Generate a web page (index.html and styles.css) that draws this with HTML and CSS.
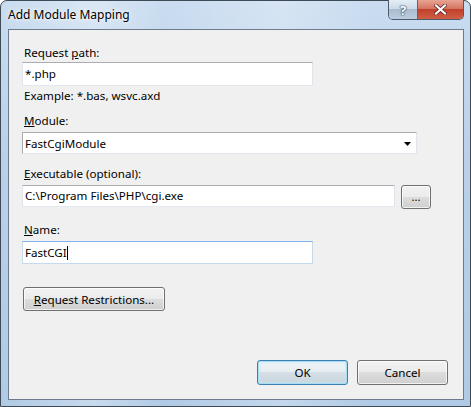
FILE: index.html
```html
<!DOCTYPE html>
<html>
<head>
<meta charset="utf-8">
<link rel="stylesheet" href="styles.css">
</head>
<body>
<div class="window">
  <div class="titlebar">
    <div class="title">Add Module Mapping</div>
    <div class="caption-buttons">
      <div class="cap-btn help">?</div>
      <div class="cap-btn close">
        <svg width="13" height="11" viewBox="0 0 13 11"><path d="M2 1.5 L11 9.5 M11 1.5 L2 9.5" stroke="#5a2020" stroke-width="3.6" stroke-linecap="square"/><path d="M2 1.5 L11 9.5 M11 1.5 L2 9.5" stroke="#ffffff" stroke-width="2.2" stroke-linecap="square"/></svg>
      </div>
    </div>
  </div>
  <div class="client">
    <div class="label l-first">Request <u>p</u>ath:</div>
    <div class="textbox tb-short tb-first">*.php</div>
    <div class="label l-example">Example: *.bas, wsvc.axd</div>
    <div class="label l-module"><u>M</u>odule:</div>
    <div class="combo">
      <span>FastCgiModule</span>
      <svg class="arrow" width="7" height="4" viewBox="0 0 7 4"><path d="M0 0 H7 L3.5 4 Z" fill="#000"/></svg>
    </div>
    <div class="label l-exec"><u>E</u>xecutable (optional):</div>
    <div class="exec-row">
      <div class="textbox tb-exec">C:\Program Files\PHP\cgi.exe</div>
      <div class="button browse">...</div>
    </div>
    <div class="label l-name"><u>N</u>ame:</div>
    <div class="textbox tb-short tb-name focused">FastCGI<span class="caret"></span></div>
    <div class="button restrict"><u>R</u>equest Restrictions...</div>
    <div class="footer">
      <div class="button ok default">OK</div>
      <div class="button cancel">Cancel</div>
    </div>
  </div>
</div>
</body>
</html>
```
FILE: styles.css
```css
* { box-sizing: border-box; }
html, body { margin: 0; padding: 0; }
body {
  width: 471px;
  height: 407px;
  font-family: "Noto Sans", "Open Sans", sans-serif;
  font-size: 11.6px;
  color: #000;
  background: #fff;
}
.window {
  width: 471px;
  height: 407px;
  display: flex;
  flex-direction: column;
  border: 1px solid #3f4a57;
  border-radius: 7px 7px 0 0;
  background:
    linear-gradient(to right, rgba(255,255,255,0) 0%, rgba(255,255,255,0.3) 20%, rgba(255,255,255,0) 35%, rgba(255,255,255,0.25) 60%, rgba(255,255,255,0) 80%),
    linear-gradient(to bottom, #c9dcf0 0%, #b9d0e8 40%, #b0cae5 100%);
  padding: 0 6px 6px 7px;
}
.titlebar {
  height: 28px;
  display: flex;
  align-items: flex-start;
  justify-content: space-between;
}
.title {
  margin-top: 6px;
  font-size: 12px;
  line-height: 16px;
  color: #000;
  text-shadow: 0 0 6px rgba(255,255,255,0.9), 0 0 3px rgba(255,255,255,0.9);
}
.caption-buttons {
  display: flex;
  margin-top: -1px;
  height: 20px;
  border: 1px solid #4d5a6a;
  border-top: none;
  border-radius: 0 0 5px 5px;
  overflow: hidden;
}
.cap-btn {
  height: 19px;
  display: flex;
  align-items: center;
  justify-content: center;
}
.help {
  width: 29px;
  border-right: 1px solid #5b6677;
  background: linear-gradient(to bottom, #e4edf6 0%, #cddbe9 45%, #a9bcd0 50%, #bccde0 100%);
  color: #fff;
  font-weight: bold;
  font-size: 13px;
  text-shadow: 0 0 1px #3a4554, 0 0 1px #3a4554, 0 0 2px #3a4554;
}
.close {
  width: 45px;
  background: linear-gradient(to bottom, #e8a493 0%, #d57561 45%, #c2402a 50%, #cf5f45 100%);
}
.client {
  flex: 1;
  background: #f0f0f0;
  border: 1px solid #6c7b8d;
  padding: 15px 15px 0 13px;
  display: flex;
  flex-direction: column;
  align-items: flex-start;
}
.label {
  line-height: 16px;
  padding-left: 2px;
  white-space: nowrap;
}
.l-example { margin-top: 2px; }
.l-module { margin-top: 9px; }
.l-exec { margin-top: 12px; }
.l-name { margin-top: 13px; }
.textbox {
  background: #fff;
  border: 1px solid #e2e3ea;
  border-top-color: #abadb3;
  border-bottom-color: #e3e9ef;
  height: 23px;
  padding: 0 2px;
  line-height: 21px;
  white-space: nowrap;
}
.tb-short { width: 291px; }
.tb-first { margin-top: 1px; height: 24px; line-height: 22px; }
.tb-name { margin-top: 3px; }
.tb-name.focused {
  border-color: #7eb4ea #c5daed #c5daed #c5daed;
}
.caret {
  display: inline-block;
  width: 1px;
  height: 14px;
  background: #000;
  vertical-align: -3px;
}
.combo {
  margin-top: 3px;
  width: 395px;
  height: 22px;
  background: #fff;
  border: 1px solid #e2e3ea;
  border-top-color: #acacac;
  border-left-color: #acacac;
  display: flex;
  align-items: center;
  justify-content: space-between;
  padding: 0 5px 0 2px;
}
.arrow { margin-top: 1px; }
.exec-row {
  margin-top: 3px;
  display: flex;
  gap: 6px;
  align-items: flex-start;
}
.tb-exec { width: 373px; height: 22px; line-height: 20px; }
.button {
  border: 1px solid #707070;
  border-radius: 3px;
  background: linear-gradient(to bottom, #f2f2f2 0%, #ebebeb 49%, #dddddd 50%, #cfcfcf 100%);
  box-shadow: inset 0 0 0 1px rgba(255,255,255,0.7);
  display: flex;
  align-items: center;
  justify-content: center;
  white-space: nowrap;
}
.browse {
  width: 30px;
  height: 24px;
  font-size: 11px;
  padding-bottom: 2px;
}
.restrict {
  margin-top: 23px;
  margin-left: 1px;
  width: 142px;
  height: 24px;
}
.footer {
  margin-top: 49px;
  align-self: flex-end;
  display: flex;
  gap: 9px;
}
.ok, .cancel {
  width: 91px;
  height: 25px;
}
.default {
  border-color: #3c7fb1;
  box-shadow: inset 0 0 0 1px #a8dcf3, inset 0 0 3px 1px #c6e8f7;
  background: linear-gradient(to bottom, #eef3f6 0%, #e6edf2 49%, #d6dfe6 50%, #c9d4dc 100%);
}
```
